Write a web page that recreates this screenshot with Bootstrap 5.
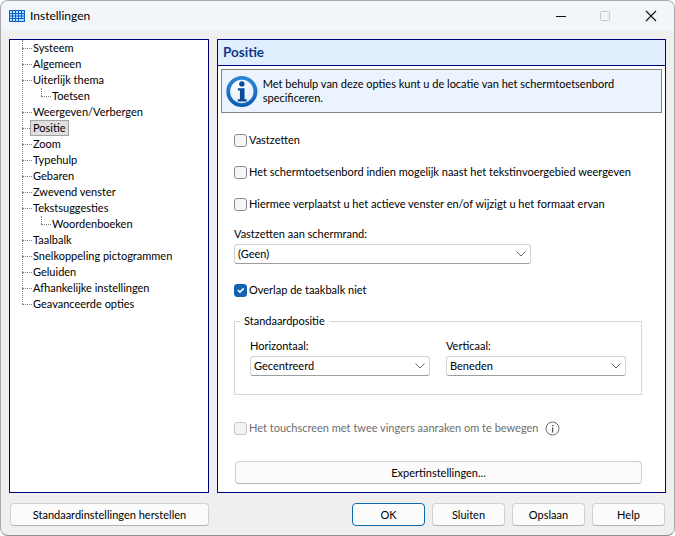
<!DOCTYPE html>
<html lang="nl">
<head>
<meta charset="utf-8">
<title>Instellingen</title>
<link href="https://cdn.jsdelivr.net/npm/bootstrap@5.3.0/dist/css/bootstrap.min.css" rel="stylesheet">
<style>
html,body{margin:0;height:100%;background:#fff;overflow:hidden}
body{font:11px/16px Lato,"Noto Sans",sans-serif;color:#000}
.win{width:675px;height:536px;background:#efefef;border:1px solid #a9a9a9;border-bottom-color:#8f8f8f;border-radius:8px;overflow:hidden;display:flex;flex-direction:column}
.titlebar{height:30px;background:#f2f6fa;display:flex;align-items:center;padding-left:8px;flex:none}
.ttl{margin-left:5px;font-size:12px}
.winctl{margin-left:auto;margin-right:1px;display:flex;align-items:center}
.winctl span{width:45px;height:30px;display:flex;align-items:center;justify-content:center}
.mainarea{display:flex;gap:8px;padding:8px 8px 0 8px;height:462px;flex:none}
.treebox{width:200px;background:#fff;border:1px solid #000080}
.tree,.tree ul{list-style:none;margin:0;padding:0}
.tree{margin-left:12px;position:relative}
.tree::before{content:"";position:absolute;left:0;top:0;bottom:8px;border-left:1px dotted #808080}
.tree li{position:relative}
.rowitem{display:flex;align-items:center;height:16px;white-space:nowrap}
.rowitem::before{content:"";width:10px;border-top:1px dotted #808080;flex:none;margin-right:1px}
.tree ul{margin-left:19px;position:relative}
.tree ul::before{content:"";position:absolute;left:0;top:0;height:8px;border-left:1px dotted #808080}
.sel{background:#dfdfdf;border:1px solid #a3a3a3;margin-left:-3px;padding:0 2px;height:16px;line-height:14px;display:inline-block}
.panel{width:449px;background:#fff;border:1px solid #000080;display:flex;flex-direction:column}
.head{height:26px;background:#e1eefe;border-bottom:1px solid #000080;font-weight:700;color:#0d3a86;font-size:13.5px;line-height:24px;padding-left:5px;flex:none}
.infob{margin:3px 3px 0 3px;height:44px;background:#eaf3fe;border:1px solid #848484;display:flex;align-items:center;padding-left:4px;gap:5px;flex:none}
.infob p{margin:0;line-height:14px}
.body{padding:0 23px 0 16px;flex:1;display:flex;flex-direction:column}
.chk{display:flex;align-items:center;height:16px;gap:2px;white-space:nowrap}
.chk .form-check-input{width:13px;height:13px;margin:0;flex:none;background-color:#f6f6f6;border:1px solid #8a8a8a;border-radius:3px}
.chk .form-check-input:checked{background-color:#0f62b4;border-color:#0f62b4}
.chk.off{color:#6d6d6d}
.chk.off .form-check-input{opacity:1;border-color:#c4c4c4;background-color:#f4f4f4}
.lab{margin:0 0 2px;line-height:16px;height:16px;display:block;white-space:nowrap}
.sel2{height:20px;padding:0 24px 0 3px;font-size:11px;line-height:18px;color:#000;border:1px solid #d2d2d2;border-bottom-color:#9e9e9e;border-radius:3px;background-color:#fff;background-image:url("data:image/svg+xml,%3csvg xmlns='http://www.w3.org/2000/svg' viewBox='0 0 10 6'%3e%3cpath d='M.5.5 5 5 9.5.5' fill='none' stroke='%23555' stroke-width='.9'/%3e%3c/svg%3e");background-position:right 4px center;background-size:10px 6px}
.wide{width:297px}
.groupbox{margin:15px 0 0;padding:0 15px;border:1px solid #d8d8d8;height:82px;min-width:0}
.groupbox legend{float:none;width:auto;margin:0 0 0 -10px;padding:0 5px 0 4px;font-size:11px;line-height:16px;height:16px}
.cols{display:flex;gap:16px;margin-top:9px}
.cols>div{width:180px;flex:none}
.btnw{height:23px;padding:0;font-size:11px;line-height:20px;color:#000;background:#fbfbfb;border:1px solid #d0d0d0;border-bottom-color:#b4b4b4;border-radius:4px}
.expert{width:407px;margin:25px 0 0 1px;flex:none}
.foot{display:flex;padding:10px 9px 0 9px;height:34px}
.foot .btnw{width:73px;margin-left:7px}
.foot .btnw.grow{margin-left:0;margin-right:auto;width:199px}
.foot .prim{border:1px solid #0c6aae}
.top19{margin-top:19px}
.top18{margin-top:18px}
.top16{margin-top:16px}
.top14{margin-top:14px}
.top25{margin-top:25px}
</style>
</head>
<body>
<div class="win">
 <div class="titlebar">
  <svg width="16" height="12" viewBox="0 0 16 12" aria-hidden="true"><rect x=".5" y=".5" width="15" height="11" fill="#bcdcf8" stroke="#0a64c8"/><path d="M3.5 1v10M6.5 1v10M9.5 1v10M12.5 1v7M1 3.5h14M1 6h14M1 8.5h14" stroke="#0a64c8" fill="none"/></svg>
  <span class="ttl">Instellingen</span>
  <div class="winctl">
   <span><svg width="12" height="12" viewBox="0 0 12 12"><path d="M1 6.5h10" stroke="#111"/></svg></span>
   <span><svg width="11" height="11" viewBox="0 0 11 11"><rect x=".5" y=".5" width="9" height="9" rx="1" fill="none" stroke="#c8c8c8"/></svg></span>
   <span><svg width="12" height="12" viewBox="0 0 12 12"><path d="M1 1l10 10M11 1L1 11" stroke="#111" stroke-width="1.1"/></svg></span>
  </div>
 </div>
 <div class="mainarea">
  <div class="treebox">
   <ul class="tree">
    <li class="rowitem">Systeem</li>
    <li class="rowitem">Algemeen</li>
    <li><div class="rowitem">Uiterlijk thema</div><ul><li class="rowitem">Toetsen</li></ul></li>
    <li class="rowitem">Weergeven/Verbergen</li>
    <li class="rowitem"><span class="sel">Positie</span></li>
    <li class="rowitem">Zoom</li>
    <li class="rowitem">Typehulp</li>
    <li class="rowitem">Gebaren</li>
    <li class="rowitem">Zwevend venster</li>
    <li><div class="rowitem">Tekstsuggesties</div><ul><li class="rowitem">Woordenboeken</li></ul></li>
    <li class="rowitem">Taalbalk</li>
    <li class="rowitem">Snelkoppeling pictogrammen</li>
    <li class="rowitem">Geluiden</li>
    <li class="rowitem">Afhankelijke instellingen</li>
    <li class="rowitem">Geavanceerde opties</li>
   </ul>
  </div>
  <div class="panel">
   <div class="head">Positie</div>
   <div class="infob">
    <svg width="33" height="33" viewBox="0 0 33 33" class="flex-none" aria-hidden="true">
     <defs>
      <radialGradient id="g" cx=".4" cy=".3" r=".8"><stop offset="0" stop-color="#fff"/><stop offset=".75" stop-color="#e6eef8"/><stop offset="1" stop-color="#a9c6e6"/></radialGradient>
      <linearGradient id="r" x1="0" y1="0" x2="0" y2="1"><stop offset="0" stop-color="#2e86d8"/><stop offset="1" stop-color="#0a5fb8"/></linearGradient>
     </defs>
     <circle cx="16.5" cy="16.5" r="14.2" fill="url(#g)" stroke="url(#r)" stroke-width="4"/>
     <circle cx="16.5" cy="8.6" r="2.8" fill="#0b4a9c"/>
     <path d="M12.3 13h7v11.6h2.2v2.4h-9.2v-2.4h2.2v-9.2h-2.2z" fill="#0b4a9c"/>
    </svg>
    <p>Met behulp van deze opties kunt u de locatie van het schermtoetsenbord specificeren.</p>
   </div>
   <div class="body">
    <label class="chk top19"><input class="form-check-input" type="checkbox">Vastzetten</label>
    <label class="chk top16"><input class="form-check-input" type="checkbox">Het schermtoetsenbord indien mogelijk naast het tekstinvoergebied weergeven</label>
    <label class="chk top16"><input class="form-check-input" type="checkbox">Hiermee verplaatst u het actieve venster en/of wijzigt u het formaat ervan</label>
    <label class="lab top14" for="edge">Vastzetten aan schermrand:</label>
    <select class="form-select sel2 wide" id="edge"><option>(Geen)</option></select>
    <label class="chk top18"><input class="form-check-input" type="checkbox" checked>Overlap de taakbalk niet</label>
    <fieldset class="groupbox">
     <legend>Standaardpositie</legend>
     <div class="cols">
      <div><label class="lab" for="hor">Horizontaal:</label><select class="form-select sel2" id="hor"><option>Gecentreerd</option></select></div>
      <div><label class="lab" for="ver">Verticaal:</label><select class="form-select sel2" id="ver"><option>Beneden</option></select></div>
     </div>
    </fieldset>
    <label class="chk off top25"><input class="form-check-input" type="checkbox" disabled>Het touchscreen met twee vingers aanraken om te bewegen
     <svg class="ms-1" width="15" height="15" viewBox="0 0 15 15" aria-hidden="true"><circle cx="7.5" cy="7.5" r="6.5" fill="none" stroke="#6d6d6d"/><rect x="7" y="6.5" width="1.3" height="5" fill="#555"/><rect x="7" y="4" width="1.3" height="1.3" fill="#555"/></svg></label>
    <button type="button" class="btn btnw expert">Expertinstellingen...</button>
   </div>
  </div>
 </div>
 <div class="foot">
  <button type="button" class="btn btnw grow">Standaardinstellingen herstellen</button>
  <button type="button" class="btn btnw prim">OK</button>
  <button type="button" class="btn btnw">Sluiten</button>
  <button type="button" class="btn btnw">Opslaan</button>
  <button type="button" class="btn btnw">Help</button>
 </div>
</div>
<script src="https://cdn.jsdelivr.net/npm/bootstrap@5.3.0/dist/js/bootstrap.bundle.min.js"></script>
</body>
</html>
